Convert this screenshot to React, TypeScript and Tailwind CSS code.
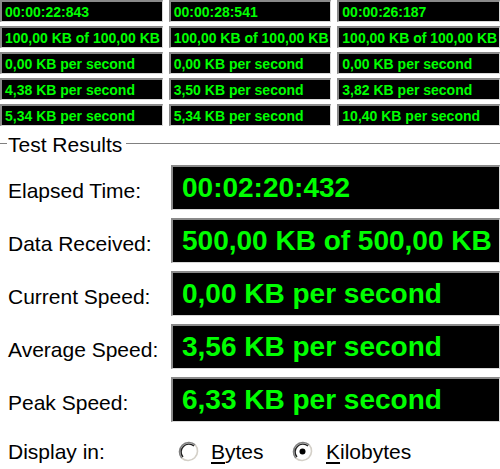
const small = [
  ["00:00:22:843", "00:00:28:541", "00:00:26:187"],
  ["100,00 KB of 100,00 KB", "100,00 KB of 100,00 KB", "100,00 KB of 100,00 KB"],
  ["0,00 KB per second", "0,00 KB per second", "0,00 KB per second"],
  ["4,38 KB per second", "3,50 KB per second", "3,82 KB per second"],
  ["5,34 KB per second", "5,34 KB per second", "10,40 KB per second"],
];

const results = [
  { label: "Elapsed Time:", value: "00:02:20:432" },
  { label: "Data Received:", value: "500,00 KB of 500,00 KB" },
  { label: "Current Speed:", value: "0,00 KB per second" },
  { label: "Average Speed:", value: "3,56 KB per second" },
  { label: "Peak Speed:", value: "6,33 KB per second" },
];

function Radio({ checked }: { checked?: boolean }) {
  return (
    <svg width="21" height="21" viewBox="0 0 21 21" className="shrink-0">
      <circle cx="10.5" cy="10.5" r="9.5" fill="#fff" />
      <path d="M3.8 17.2 A9.5 9.5 0 0 1 17.2 3.8" fill="none" stroke="#808080" strokeWidth="1.6" />
      <path d="M5 16 A7.8 7.8 0 0 1 16 5" fill="none" stroke="#222" strokeWidth="1.4" />
      <path d="M17.2 3.8 A9.5 9.5 0 0 1 3.8 17.2" fill="none" stroke="#d4d0c8" strokeWidth="1.6" />
      {checked && <circle cx="10.5" cy="10.5" r="3" fill="#000" />}
    </svg>
  );
}

export default function App() {
  return (
    <div className="w-[500px] h-[469px] bg-white overflow-hidden font-['Liberation_Sans',Arial,sans-serif] text-black">
      {/* top: three test runs */}
      <div className="grid grid-cols-3 gap-x-[6px] gap-y-[4px]">
        {small.map((row, r) =>
          row.map((v, c) => (
            <div
              key={r + "-" + c}
              className="h-[22px] bg-black border-t-2 border-l-2 border-[#8a8a8a] border-b border-r border-b-[#d8d8d8] border-r-[#d8d8d8] flex items-center pl-[3px] text-[14px] font-bold text-[#00ff00] whitespace-nowrap overflow-hidden leading-none"
            >
              {v}
            </div>
          ))
        )}
      </div>

      {/* group header */}
      <div className="mt-[6px] h-[24px] flex items-center">
        <div className="w-[7px] h-[2px] border-t border-t-[#808080] border-b border-b-white" />
        <span className="px-[1px] text-[21px] leading-none">Test Results</span>
        <div className="flex-1 ml-[3px] h-[2px] border-t border-t-[#808080] border-b border-b-white" />
      </div>

      {/* results */}
      <div className="mt-[9px] flex flex-col gap-[8px]">
        {results.map((r) => (
          <div key={r.label} className="flex items-center h-[45px]">
            <div className="w-[171px] pl-[8px] pt-[5px] text-[21px] leading-none whitespace-nowrap">{r.label}</div>
            <div className="flex-1 h-full bg-black border-t-2 border-l-2 border-[#8a8a8a] border-b border-r border-b-[#d8d8d8] border-r-[#d8d8d8] flex items-center pl-[9px] text-[28px] font-bold text-[#00ff00] whitespace-nowrap overflow-hidden leading-none">
              {r.value}
            </div>
          </div>
        ))}
      </div>

      {/* display in */}
      <div className="mt-[17px] h-[24px] flex items-center text-[21px] leading-none">
        <span className="w-[178px] pl-[8px]">Display in:</span>
        <Radio />
        <span className="ml-[12px] w-[81px]">
          <span className="underline underline-offset-[3px]">B</span>ytes
        </span>
        <Radio checked />
        <span className="ml-[13px]">
          <span className="underline underline-offset-[3px]">K</span>ilobytes
        </span>
      </div>
    </div>
  );
}
